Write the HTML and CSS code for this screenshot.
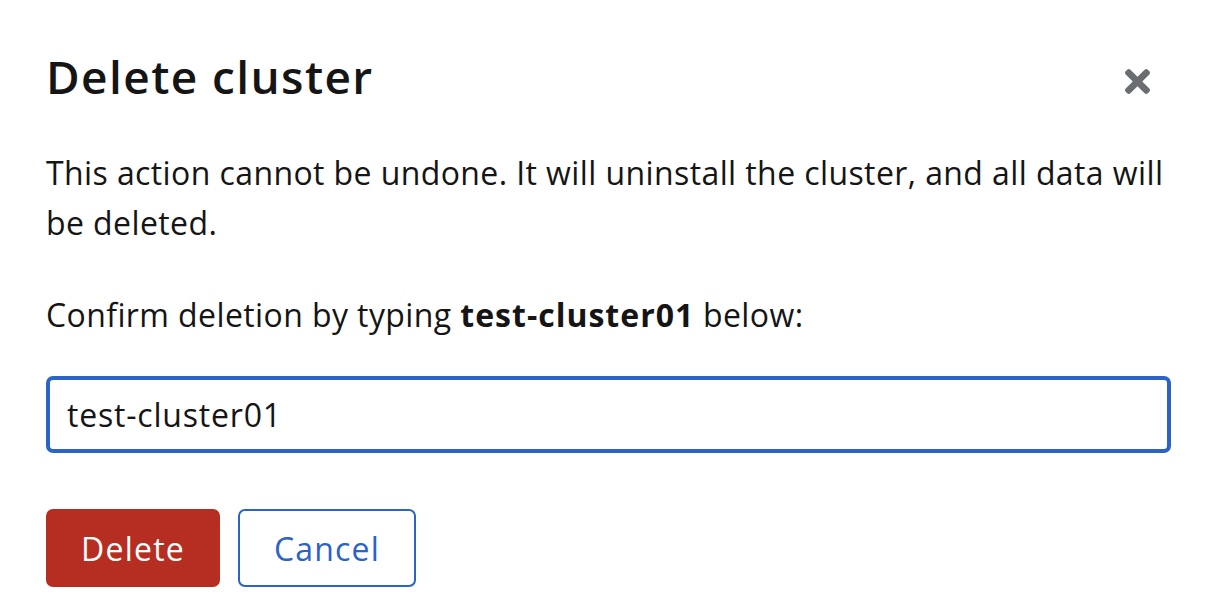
FILE: index.html
```html
<!DOCTYPE html>
<html lang="en">
<head>
<meta charset="utf-8">
<title>Delete cluster</title>
<link rel="stylesheet" href="styles.css">
</head>
<body>
<div class="modal">
  <header class="modal-header">
    <h1 class="modal-title">Delete cluster</h1>
    <button class="close-btn" aria-label="Close">
      <svg viewBox="0 80 352 352" width="25" height="25" aria-hidden="true"><path fill="currentColor" d="M242.72 256l100.07-100.07c12.28-12.28 12.28-32.19 0-44.48l-22.24-22.24c-12.28-12.28-32.19-12.28-44.48 0L176 189.28 75.930 89.210c-12.28-12.28-32.19-12.28-44.48 0L9.21 111.45c-12.28 12.28-12.28 32.19 0 44.48L109.28 256 9.21 356.07c-12.28 12.28-12.28 32.19 0 44.48l22.24 22.24c12.28 12.28 32.2 12.28 44.48 0L176 322.72l100.07 100.07c12.28 12.28 32.2 12.28 44.48 0l22.24-22.240c12.28-12.28 12.28-32.19 0-44.48L242.72 256z"/></svg>
    </button>
  </header>
  <div class="modal-body">
    <p class="text">This action cannot be undone. It will uninstall the cluster, and all data will be deleted.</p>
    <p class="text confirm">Confirm deletion by typing <strong>test-cluster01</strong> below:</p>
    <input class="input" type="text" value="test-cluster01">
  </div>
  <footer class="modal-footer">
    <button class="btn btn-danger">Delete</button>
    <button class="btn btn-link">Cancel</button>
  </footer>
</div>
</body>
</html>
```

FILE: styles.css
```css
html, body {
  margin: 0;
  padding: 0;
  background: #ffffff;
}
body {
  font-family: "Open Sans", "Liberation Sans", sans-serif;
  color: #151515;
}
.modal {
  width: 1208px;
  box-sizing: border-box;
  padding: 48px 37px 0 46px;
}
.modal-header {
  display: flex;
  justify-content: space-between;
  align-items: flex-start;
}
.modal-title {
  margin: 0;
  font-size: 46px;
  line-height: 56px;
  font-weight: 600;
  letter-spacing: 1.4px;
  color: #151515;
}
.close-btn {
  border: 0;
  background: none;
  padding: 0;
  margin: 21px 21px 0 0;
  color: #6a6e73;
  display: flex;
  cursor: pointer;
}
.modal-body {
  padding-top: 44px;
}
.text {
  margin: 0;
  font-size: 32px;
  line-height: 50px;
  letter-spacing: 0.4px;
}
.text strong {
  font-weight: 700;
  letter-spacing: 1px;
}
.confirm {
  margin-top: 42px;
}
.input {
  display: block;
  width: 100%;
  box-sizing: border-box;
  height: 77px;
  margin-top: 36px;
  border: 4px solid #2b63c6;
  border-radius: 7px;
  padding: 0 17px;
  font-family: "Open Sans", "Liberation Sans", sans-serif;
  font-size: 32px;
  letter-spacing: 0.8px;
  color: #151515;
  outline: none;
  background: #fff;
}
.modal-footer {
  display: flex;
  gap: 18px;
  margin-top: 56px;
}
.btn {
  height: 78px;
  box-sizing: border-box;
  border-radius: 7px;
  font-family: "Open Sans", "Liberation Sans", sans-serif;
  font-size: 32px;
  letter-spacing: 1.2px;
  padding: 0;
  cursor: pointer;
}
.btn-danger {
  background: #b62e21;
  color: #ffffff;
  border: 0;
  width: 174px;
}
.btn-link {
  background: #ffffff;
  color: #2b63c6;
  border: 2px solid #2b63c6;
  width: 178px;
}
```
